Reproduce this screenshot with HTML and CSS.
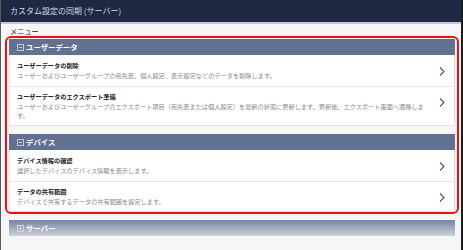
FILE: index.html
```html
<!DOCTYPE html>
<html>
<head>
  <title>カスタム設定の同期 (サーバー)</title>
  <link rel="stylesheet" href="styles.css">
</head>
<body>
  <div class="window">
    <div class="titlebar">カスタム設定の同期 (サーバー)</div>

    <div class="content">
      <div class="menu-label">メニュー</div>

      <div class="highlight">
        <div class="group">
          <div class="group-head">
            <svg class="toggle" width="7" height="7" viewBox="0 0 7 7"><rect x="0.5" y="0.5" width="6" height="6" fill="none" stroke="#c3c9d6"/><line x1="2" y1="3.5" x2="5" y2="3.5" stroke="#c3c9d6"/></svg>
            ユーザーデータ
          </div>
          <div class="item">
            <div class="item-text">
              <div class="item-title">ユーザーデータの削除</div>
              <div class="item-desc">ユーザーおよびユーザーグループの宛先表、個人設定、表示設定などのデータを削除します。</div>
            </div>
            <svg class="chevron" width="6" height="9" viewBox="0 0 6 9"><polyline points="1,0.5 5,4.5 1,8.5" fill="none" stroke="#555" stroke-width="1.1"/></svg>
          </div>
          <div class="item">
            <div class="item-text">
              <div class="item-title">ユーザーデータのエクスポート準備</div>
              <div class="item-desc">ユーザーおよびユーザーグループのエクスポート項目（宛先表または個人設定）を最新の状態に更新します。更新後、エクスポート画面へ遷移します。</div>
            </div>
            <svg class="chevron" width="6" height="9" viewBox="0 0 6 9"><polyline points="1,0.5 5,4.5 1,8.5" fill="none" stroke="#555" stroke-width="1.1"/></svg>
          </div>
        </div>

        <div class="group">
          <div class="group-head">
            <svg class="toggle" width="7" height="7" viewBox="0 0 7 7"><rect x="0.5" y="0.5" width="6" height="6" fill="none" stroke="#c3c9d6"/><line x1="2" y1="3.5" x2="5" y2="3.5" stroke="#c3c9d6"/></svg>
            デバイス
          </div>
          <div class="item">
            <div class="item-text">
              <div class="item-title">デバイス情報の確認</div>
              <div class="item-desc">選択したデバイスのデバイス情報を表示します。</div>
            </div>
            <svg class="chevron" width="6" height="9" viewBox="0 0 6 9"><polyline points="1,0.5 5,4.5 1,8.5" fill="none" stroke="#555" stroke-width="1.1"/></svg>
          </div>
          <div class="item">
            <div class="item-text">
              <div class="item-title">データの共有範囲</div>
              <div class="item-desc">デバイスで共有するデータの共有範囲を設定します。</div>
            </div>
            <svg class="chevron" width="6" height="9" viewBox="0 0 6 9"><polyline points="1,0.5 5,4.5 1,8.5" fill="none" stroke="#555" stroke-width="1.1"/></svg>
          </div>
        </div>
      </div>

      <div class="group-head collapsed">
        <svg class="toggle" width="7" height="7" viewBox="0 0 7 7"><rect x="0.5" y="0.5" width="6" height="6" fill="none" stroke="#d0d4de"/><line x1="2" y1="3.5" x2="5" y2="3.5" stroke="#d0d4de"/><line x1="3.5" y1="2" x2="3.5" y2="5" stroke="#d0d4de"/></svg>
        サーバー
      </div>
    </div>
  </div>
</body>
</html>
```

FILE: styles.css
```css
body {
  margin: 0;
  font-family: "Noto Sans CJK JP", "Noto Sans", sans-serif;
  background: #f6f6f7;
}

.window {
  height: 250px;
  box-sizing: border-box;
  border-left: 1px solid #5a5a5a;
  border-right: 2px solid #1b1b1b;
  background: #f6f6f7;
  overflow: hidden;
}

.titlebar {
  height: 22px;
  line-height: 22px;
  padding-left: 9px;
  background: #1f2944;
  color: #d6d9e2;
  font-size: 8px;
  border-bottom: 2px solid #c6c9d5;
}

.content {
  padding-top: 3px;
}

.menu-label {
  font-size: 7.2px;
  line-height: 9px;
  color: #222;
  padding-left: 9px;
}

.highlight {
  margin: 0 2px 0 4px;
  padding: 1px 2px 0 2px;
  border: 2px solid #ee1111;
  border-radius: 6px;
}

.group {
  background: #fff;
  border-bottom: 1px solid #e2e2e2;
}

.group + .group {
  margin-top: 8px;
}

.group-head {
  display: flex;
  align-items: center;
  gap: 2px;
  height: 16px;
  padding-left: 8px;
  background: #637190;
  color: #fff;
  font-size: 7.4px;
  line-height: 16px;
  font-weight: bold;
}

.group-head.collapsed {
  margin: 6px 6px 0 8px;
  background: linear-gradient(to bottom, #77839e, #cdd1dc);
}

.toggle {
  flex: none;
}

.item {
  display: flex;
  align-items: flex-start;
  padding: 5px 9px 5.5px 7px;
  border-left: 1px solid #e6e6e6;
  border-right: 1px solid #dcdcdc;
  border-top: 1px solid #e6e6e6;
}

.group-head + .item {
  border-top: none;
  padding-top: 6px;
}

.item-text {
  flex: 1;
}

.item-title {
  font-size: 6.2px;
  line-height: 9px;
  font-weight: bold;
  color: #222;
}

.item-desc {
  margin-top: 1px;
  font-size: 6.2px;
  line-height: 9px;
  color: #8a8a8a;
}

.chevron {
  flex: none;
  margin: 6px 0 0 12px;
}
```
